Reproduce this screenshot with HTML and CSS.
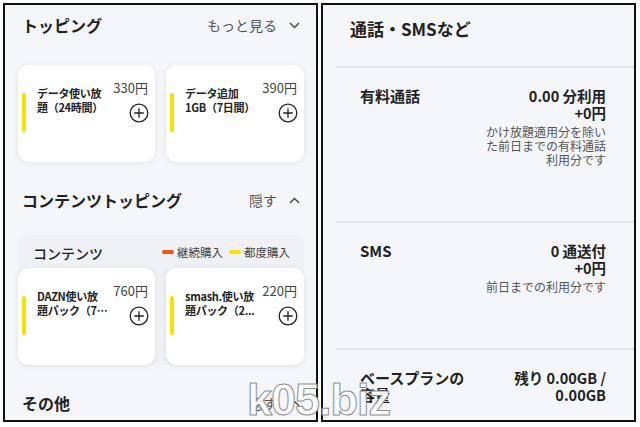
FILE: index.html
```html
<!DOCTYPE html>
<html lang="ja">
<head>
<meta charset="utf-8">
<link rel="stylesheet" href="styles.css">
</head>
<body>
<div class="stage">
  <section class="panel left">
    <div class="sec-head">
      <h2 class="sec-title">トッピング</h2>
      <div class="sec-action">もっと見る
        <svg class="chev" width="11" height="7" viewBox="0 0 11 7"><path d="M1 1l4.5 4.5L10 1" fill="none" stroke="#444" stroke-width="1.4"/></svg>
      </div>
    </div>
    <div class="cards">
      <div class="card">
        <span class="bar"></span>
        <div class="card-name">データ使い放<br>題（24時間）</div>
        <div class="card-side">
          <div class="price">330円</div>
          <svg class="plus" width="20" height="20" viewBox="0 0 20 20"><circle cx="10" cy="10" r="8.8" fill="none" stroke="#222" stroke-width="1.3"/><path d="M10 5.2v9.6M5.2 10h9.6" stroke="#222" stroke-width="1.3"/></svg>
        </div>
      </div>
      <div class="card">
        <span class="bar"></span>
        <div class="card-name">データ追加<br>1GB（7日間）</div>
        <div class="card-side">
          <div class="price">390円</div>
          <svg class="plus" width="20" height="20" viewBox="0 0 20 20"><circle cx="10" cy="10" r="8.8" fill="none" stroke="#222" stroke-width="1.3"/><path d="M10 5.2v9.6M5.2 10h9.6" stroke="#222" stroke-width="1.3"/></svg>
        </div>
      </div>
    </div>

    <div class="sec-head second">
      <h2 class="sec-title">コンテンツトッピング</h2>
      <div class="sec-action">隠す
        <svg class="chev" width="11" height="7" viewBox="0 0 11 7"><path d="M1 6l4.5-4.5L10 6" fill="none" stroke="#444" stroke-width="1.4"/></svg>
      </div>
    </div>
    <div class="content-box">
      <div class="box-head">
        <span class="box-label">コンテンツ</span>
        <span class="legend"><i class="dash orange"></i>継続購入<i class="dash yellow"></i>都度購入</span>
      </div>
      <div class="cards">
        <div class="card">
          <span class="bar"></span>
          <div class="card-name">DAZN使い放<br>題パック（7…</div>
          <div class="card-side">
            <div class="price">760円</div>
            <svg class="plus" width="20" height="20" viewBox="0 0 20 20"><circle cx="10" cy="10" r="8.8" fill="none" stroke="#222" stroke-width="1.3"/><path d="M10 5.2v9.6M5.2 10h9.6" stroke="#222" stroke-width="1.3"/></svg>
          </div>
        </div>
        <div class="card">
          <span class="bar"></span>
          <div class="card-name">smash.使い放<br>題パック（2...</div>
          <div class="card-side">
            <div class="price">220円</div>
            <svg class="plus" width="20" height="20" viewBox="0 0 20 20"><circle cx="10" cy="10" r="8.8" fill="none" stroke="#222" stroke-width="1.3"/><path d="M10 5.2v9.6M5.2 10h9.6" stroke="#222" stroke-width="1.3"/></svg>
          </div>
        </div>
      </div>
    </div>

    <div class="sec-head third">
      <h2 class="sec-title">その他</h2>
      <div class="sec-action">隠す
        <svg class="chev" width="11" height="7" viewBox="0 0 11 7"><path d="M1 6l4.5-4.5L10 6" fill="none" stroke="#444" stroke-width="1.4"/></svg>
      </div>
    </div>
  </section>

  <section class="panel right">
    <h2 class="r-title">通話・SMSなど</h2>
    <div class="row">
      <div class="row-label">有料通話</div>
      <div class="row-value">
        <div class="v">0.00 分利用</div>
        <div class="v">+0円</div>
        <div class="note">かけ放題適用分を除い<br>た前日までの有料通話<br>利用分です</div>
      </div>
    </div>
    <div class="row">
      <div class="row-label">SMS</div>
      <div class="row-value">
        <div class="v">0 通送付</div>
        <div class="v">+0円</div>
        <div class="note">前日までの利用分です</div>
      </div>
    </div>
    <div class="row">
      <div class="row-label">ベースプランの容量</div>
      <div class="row-value">
        <div class="v">残り 0.00GB /<br>0.00GB</div>
      </div>
    </div>
  </section>
  <div class="watermark">k05.biz</div>
</div>
</body>
</html>
```

FILE: styles.css
```css
* { box-sizing: border-box; margin: 0; padding: 0; }
html, body { width: 640px; height: 427px; background: #fff; overflow: hidden; }
body {
  font-family: "Noto Sans CJK JP", "Noto Sans", sans-serif;
  color: #222;
}
.stage {
  position: relative;
  display: flex;
  gap: 3px;
  padding: 3px 0 0 3px;
  width: 640px;
  height: 427px;
}
.panel {
  height: 419px;
  border: 2px solid #111;
  background: #f5f6fa;
  overflow: hidden;
}
.left { width: 315px; }
.right { width: 315px; }

/* left panel */
.sec-head {
  display: flex;
  align-items: center;
  justify-content: space-between;
  height: 40px;
  padding: 0 16px 0 17px;
}
.sec-head.second { margin-top: 18px; }
.sec-head.third { margin-top: 18px; }
.sec-title {
  font-size: 16px;
  font-weight: 700;
  color: #222;
  line-height: 20px;
}
.sec-action {
  display: flex;
  align-items: center;
  gap: 12px;
  font-size: 14px;
  color: #555;
  line-height: 18px;
}
.chev { display: block; }
.cards {
  display: grid;
  grid-template-columns: 137px 138px;
  gap: 11px;
  margin: 20px 12px 0 13px;
}
.content-box .cards { margin: 0; }
.card {
  display: flex;
  align-items: flex-start;
  height: 97px;
  background: #fff;
  border-radius: 11px;
  box-shadow: 0 1px 6px rgba(0, 0, 0, 0.08);
  padding: 15px 7px 0 4px;
}
.bar {
  flex: none;
  width: 4px;
  height: 39px;
  margin-top: 13px;
  border-radius: 2px;
  background: #f5e400;
}
.card-name {
  margin: 6px 0 0 11px;
  font-size: 11px;
  font-weight: 700;
  line-height: 14px;
  white-space: nowrap;
  letter-spacing: -0.3px;
  color: #222;
}
.card-side {
  margin-left: auto;
  padding-left: 4px;
  display: flex;
  flex-direction: column;
  align-items: flex-end;
}
.price {
  font-size: 13px;
  line-height: 16px;
  color: #444;
}
.plus { display: block; margin-top: 7px; margin-right: -1px; }
.content-box {
  margin: 15px 12px 0 13px;
  background: #eff1f5;
  border-radius: 10px 10px 11px 11px;
}
.box-head {
  display: flex;
  align-items: center;
  justify-content: space-between;
  height: 33px;
  padding: 0 14px 0 15px;
}
.box-label {
  font-size: 14px;
  font-weight: 500;
  color: #222;
  margin-top: 3px;
}
.legend {
  display: flex;
  align-items: center;
  font-size: 11.5px;
  color: #444;
}
.dash {
  display: inline-block;
  width: 12px;
  height: 4px;
  border-radius: 2px;
  margin-right: 3px;
}
.dash.orange { background: #e8571c; }
.dash.yellow { background: #f5e400; margin-left: 6px; }

/* right panel */
.r-title {
  font-size: 17px;
  font-weight: 700;
  line-height: 22px;
  padding: 13px 0 0 27px;
  height: 61px;
  color: #222;
}
.row {
  display: flex;
  justify-content: space-between;
  align-items: flex-start;
  margin-left: 13px;
  border-top: 2px solid #e3e5e9;
  padding: 19px 28px 54px 24px;
}
.row-label {
  width: 112px;
  font-size: 15px;
  font-weight: 700;
  line-height: 17px;
  color: #222;
}
.row-value {
  text-align: right;
}
.v {
  font-size: 14.5px;
  font-weight: 700;
  line-height: 17px;
  color: #222;
}
.note {
  margin-top: 4px;
  font-size: 12px;
  line-height: 14px;
  color: #555;
}

.watermark {
  position: absolute;
  left: 247px;
  top: 377px;
  font-family: "Liberation Sans", Arial, sans-serif;
  font-weight: 700;
  font-size: 45px;
  line-height: 45px;
  letter-spacing: -1px;
  color: #fff;
  -webkit-text-stroke: 1px #8a8a8a;
  opacity: 0.95;
}
```
